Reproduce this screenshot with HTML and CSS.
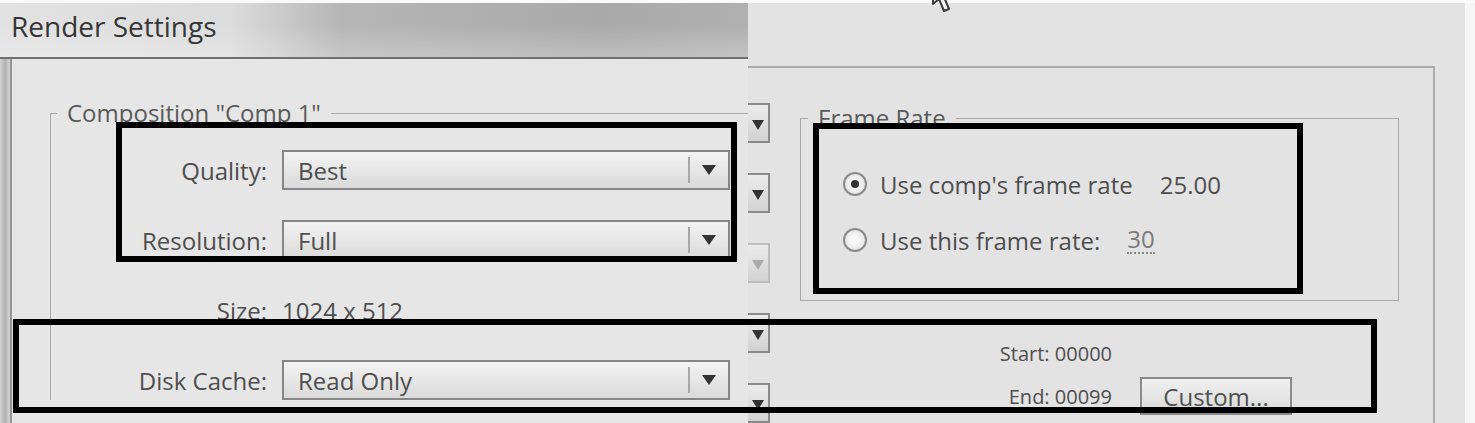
FILE: index.html
```html
<!DOCTYPE html>
<html lang="en">
<head>
    <meta charset="UTF-8">
    <meta name="viewport" content="width=device-width, initial-scale=1.0">
    <title>Render Settings</title>
    <link rel="stylesheet" href="styles.css">
</head>
<body>
    <div class="left">
        <div class="top-strip"></div>
        <div class="titlebar">Render Settings</div>
        <div class="dialog">
            <fieldset class="group comp">
                <legend>Composition "Comp 1"</legend>
                <div class="rows">
                    <div class="row">
                        <span class="label">Quality:</span>
                        <div class="select"><span class="value">Best</span><span class="btn"><i class="arrow"></i></span></div>
                    </div>
                    <div class="row">
                        <span class="label">Resolution:</span>
                        <div class="select"><span class="value">Full</span><span class="btn"><i class="arrow"></i></span></div>
                    </div>
                    <div class="row">
                        <span class="label">Size:</span>
                        <span class="value-text">1024 x 512</span>
                    </div>
                    <div class="row">
                        <span class="label">Disk Cache:</span>
                        <div class="select"><span class="value">Read Only</span><span class="btn"><i class="arrow"></i></span></div>
                    </div>
                </div>
            </fieldset>
        </div>
    </div>

    <div class="right">
        <div class="top-strip"></div>
        <svg class="cursor" width="30" height="16" viewBox="0 0 30 16">
            <path d="M3 -6 L3 4 L9 -1 L14 11 L19 9 L14 -3 L22 -3" fill="#f4f4f4" stroke="#3a3a3a" stroke-width="2" stroke-linejoin="round"/>
        </svg>
        <div class="frame">
            <div class="stubs">
                <div class="stub"><i class="arrow"></i></div>
                <div class="stub"><i class="arrow"></i></div>
                <div class="stub disabled"><i class="arrow"></i></div>
                <div class="stub"><i class="arrow"></i></div>
                <div class="stub"><i class="arrow"></i></div>
            </div>
            <div class="main">
                <fieldset class="group rate">
                    <legend>Frame Rate</legend>
                    <div class="radios">
                        <div class="radio-row">
                            <span class="radio checked"></span>
                            <span>Use comp's frame rate</span>
                            <span class="rate-value">25.00</span>
                        </div>
                        <div class="radio-row">
                            <span class="radio"></span>
                            <span>Use this frame rate:</span>
                            <span class="rate-value editable">30</span>
                        </div>
                    </div>
                </fieldset>
                <div class="range">
                    <span class="range-label">Start: 00000</span>
                    <span></span>
                    <span class="range-label">End: 00099</span>
                    <button class="custom">Custom...</button>
                </div>
            </div>
        </div>
    </div>

    <div class="mark mark-quality"></div>
    <div class="mark mark-rate"></div>
    <div class="mark mark-cache"></div>
</body>
</html>
```

FILE: styles.css
```css
body {
    margin: 0;
    width: 1475px;
    height: 423px;
    overflow: hidden;
    display: flex;
    position: relative;
    font-family: "Open Sans", "Noto Sans", sans-serif;
    color: #4e4e4e;
    background-color: #e4e4e4;
}

.top-strip {
    height: 3px;
    background-color: #fafafa;
}

/* left half: the dialog */
.left {
    width: 748px;
    display: flex;
    flex-direction: column;
    background: linear-gradient(to right, #d4d4d4 0, #b0b0b0 5px, #d6d6d6 10px, #e6e6e6 10px);
}

.titlebar {
    height: 54px;
    padding-left: 11px;
    font-size: 28px;
    line-height: 46px;
    color: #363636;
    border-bottom: 2px solid #707070;
    background:
        linear-gradient(to bottom, rgba(255, 255, 255, 0) 40%, rgba(255, 255, 255, 0.25) 100%),
        linear-gradient(to right, #e2e2e2 0, #dcdcdc 230px, #b6b6b6 340px, #a9a9a9 600px, #b0b0b0 748px);
}

.dialog {
    flex: 1;
    margin-left: 10px;
    padding: 40px 0 0 38px;
    border-left: 2px solid #959595;
    background-color: #e6e6e6;
}

.group {
    margin: 0;
    min-width: 0;
    border: 1px solid #a9a9a9;
}

.group legend {
    font-size: 24px;
    line-height: 28px;
    color: #5a5a5a;
}

.comp {
    padding: 23px 0 0 6px;
    border-right: none;
    border-bottom: none;
}

.comp legend {
    padding: 0 10px 0 10px;
}

.rows {
    display: flex;
    flex-direction: column;
    gap: 30px;
}

.row {
    display: flex;
    align-items: center;
    gap: 15px;
    height: 40px;
    font-size: 24px;
}

.label {
    width: 210px;
    text-align: right;
}

.select {
    width: 448px;
    height: 40px;
    box-sizing: border-box;
    display: flex;
    align-items: center;
    border: 2px solid #868686;
    background: linear-gradient(to bottom, #f3f3f3, #dadada);
}

.select .value {
    flex: 1;
    padding-left: 14px;
}

.select .btn {
    width: 38px;
    height: 26px;
    display: flex;
    justify-content: center;
    align-items: center;
    border-left: 2px solid #a8a8a8;
}

.arrow {
    width: 0;
    height: 0;
    border-left: 7px solid transparent;
    border-right: 7px solid transparent;
    border-top: 10px solid #333;
}

/* right half */
.right {
    width: 727px;
    position: relative;
    display: flex;
    flex-direction: column;
    background: linear-gradient(to right, #e3e3e3 717px, #f6f6f6 717px);
}

.cursor {
    position: absolute;
    left: 182px;
    top: 0;
}

.frame {
    flex: 1;
    width: 685px;
    margin-top: 63px;
    padding-top: 35px;
    display: flex;
    border-top: 2px solid #ababab;
    border-right: 2px solid #ababab;
}

.stubs {
    width: 22px;
    display: flex;
    flex-direction: column;
    gap: 30px;
}

.stub {
    height: 40px;
    flex-shrink: 0;
    box-sizing: border-box;
    padding: 15px 0 0 4px;
    border: 2px solid #8a8a8a;
    border-left: none;
    background: linear-gradient(to bottom, #ececec, #d2d2d2);
}

.stub .arrow {
    display: block;
    border-left-width: 6px;
    border-right-width: 6px;
}

.stub.disabled {
    border-color: #bdbdbd;
}

.stub.disabled .arrow {
    border-top-color: #ababab;
}

.main {
    margin-left: 30px;
    padding-top: 1px;
}

.rate {
    width: 599px;
    height: 197px;
    box-sizing: border-box;
    padding: 36px 0 0 7px;
}

.rate legend {
    padding: 0 10px;
}

.radios {
    display: flex;
    flex-direction: column;
    gap: 24px;
}

.radio-row {
    display: flex;
    align-items: center;
    height: 32px;
    padding-left: 35px;
    font-size: 24px;
}

.radio {
    width: 24px;
    height: 24px;
    box-sizing: border-box;
    margin-right: 13px;
    border: 2px solid #8a8a8a;
    border-radius: 50%;
    background: radial-gradient(circle, #f6f6f6 30%, #dcdcdc 100%);
    display: flex;
    justify-content: center;
    align-items: center;
}

.radio.checked::after {
    content: "";
    width: 8px;
    height: 8px;
    border-radius: 50%;
    background-color: #333;
}

.rate-value {
    margin-left: 27px;
}

.rate-value.editable {
    color: #7a7a7a;
    line-height: 26px;
    border-bottom: 2px dotted #8a8a8a;
}

.range {
    display: grid;
    grid-template-columns: 312px 152px;
    grid-template-rows: 30px 38px;
    column-gap: 28px;
    row-gap: 9px;
    align-items: center;
    margin-top: 37px;
}

.range-label {
    text-align: right;
    font-size: 20px;
}

.custom {
    height: 38px;
    padding: 0;
    font-family: inherit;
    font-size: 24px;
    color: #505050;
    border: 2px solid #8a8a8a;
    background: linear-gradient(to bottom, #f0f0f0, #dadada);
}

/* black highlight frames drawn over the screenshot */
.mark {
    position: absolute;
    box-sizing: border-box;
    border: 6px solid #000;
}

.mark-quality {
    left: 116px;
    top: 122px;
    width: 621px;
    height: 140px;
}

.mark-rate {
    left: 813px;
    top: 123px;
    width: 490px;
    height: 171px;
}

.mark-cache {
    left: 13px;
    top: 319px;
    width: 1364px;
    height: 94px;
}
```
